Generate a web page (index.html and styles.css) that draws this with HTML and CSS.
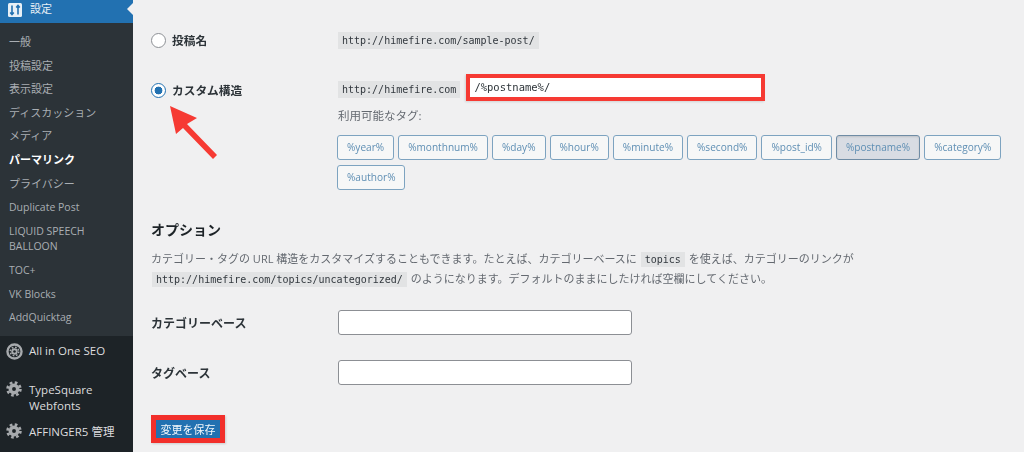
FILE: index.html
```html
<!DOCTYPE html>
<html lang="ja">
<head>
<meta charset="utf-8">
<title>パーマリンク設定</title>
<link rel="stylesheet" href="styles.css">
</head>
<body>
<div class="app">
  <nav class="side">
    <div class="current">
      <svg class="ic-settings" viewBox="0 0 14 14" width="14" height="14"><rect width="14" height="14" rx="1.5" fill="#e8f0f6"/><path d="M4 2.500v9M2.200 9.500 4 11.500l1.800-2M10 11.500v-9M8.200 4.500 10 2.500l1.800 2" fill="none" stroke="#2271b1" stroke-width="1.600"/></svg>
      <span>設定</span>
    </div>
    <ul class="sub">
      <li>一般</li>
      <li>投稿設定</li>
      <li>表示設定</li>
      <li>ディスカッション</li>
      <li>メディア</li>
      <li class="on">パーマリンク</li>
      <li>プライバシー</li>
      <li class="lat">Duplicate Post</li>
      <li class="lat two">LIQUID SPEECH BALLOON</li>
      <li class="lat">TOC+</li>
      <li class="lat">VK Blocks</li>
      <li class="lat">AddQuicktag</li>
    </ul>
    <ul class="top">
      <li class="seo">
        <svg class="ic" viewBox="0 0 20 20" width="17" height="17"><circle cx="10" cy="10" r="8.300" fill="none" stroke="#a7aaad" stroke-width="2.800"/><circle cx="10" cy="10" r="3.800" fill="#a7aaad"/><circle cx="10" cy="10" r="5" fill="none" stroke="#a7aaad" stroke-width="1.800" stroke-dasharray="2 1.930"/><circle cx="10" cy="10" r="1.500" fill="#1d2327"/></svg>
        <span>All in One SEO</span>
      </li>
      <li class="ts">
        <svg class="ic" viewBox="0 0 20 20" width="16" height="16"><circle class="gear-body" cx="10" cy="10" r="6.800"/><circle class="gear-teeth" cx="10" cy="10" r="8" stroke-dasharray="3.280 3" /><circle class="gear-hole" cx="10" cy="10" r="2.400"/></svg>
        <span>TypeSquare Webfonts</span>
      </li>
      <li class="af">
        <svg class="ic" viewBox="0 0 20 20" width="16" height="16"><circle class="gear-body" cx="10" cy="10" r="6.800"/><circle class="gear-teeth" cx="10" cy="10" r="8" stroke-dasharray="3.280 3" /><circle class="gear-hole" cx="10" cy="10" r="2.400"/></svg>
        <span>AFFINGER5 管理</span>
      </li>
    </ul>
  </nav>

  <main class="main">
    <div class="row row-sample">
      <label class="opt"><span class="radio"></span>投稿名</label>
      <div><code>http://himefire.com/sample-post/</code></div>
    </div>

    <div class="row row-custom">
      <label class="opt"><span class="radio checked"></span>カスタム構造</label>
      <div class="cell">
        <div class="struct">
          <code>http://himefire.com</code>
          <div class="mark-input"><span class="field">/%postname%/</span></div>
        </div>
        <p class="avail">利用可能なタグ:</p>
        <div class="tags">
          <button class="tag">%year%</button>
          <button class="tag">%monthnum%</button>
          <button class="tag">%day%</button>
          <button class="tag">%hour%</button>
          <button class="tag">%minute%</button>
          <button class="tag">%second%</button>
          <button class="tag">%post_id%</button>
          <button class="tag active">%postname%</button>
          <button class="tag">%category%</button>
          <button class="tag">%author%</button>
        </div>
      </div>
    </div>

    <h2 class="heading">オプション</h2>
    <p class="desc">カテゴリー・タグの URL 構造をカスタマイズすることもできます。たとえば、カテゴリーベースに <code>topics</code> を使えば、カテゴリーのリンクが<br><code>http://himefire.com/topics/uncategorized/</code> のようになります。デフォルトのままにしたければ空欄にしてください。</p>

    <div class="row row-field first">
      <span class="flabel">カテゴリーベース</span>
      <span class="textbox"></span>
    </div>
    <div class="row row-field">
      <span class="flabel">タグベース</span>
      <span class="textbox"></span>
    </div>

    <div class="mark-btn"><button class="save">変更を保存</button></div>

    <svg class="arrow" viewBox="0 0 60 60" width="60" height="60"><path d="M2 2 29 14 19 20 49 51 45 55 15 24 8 30z" fill="#f63a33"/></svg>
  </main>
</div>
</body>
</html>
```

FILE: styles.css
```css
* { box-sizing: border-box; }
html, body { margin: 0; padding: 0; height: 452px; overflow: hidden; }
body {
  background: #f0f0f1;
  color: #3c434a;
  font-family: "Open Sans", "Noto Sans CJK JP", sans-serif;
  font-size: 12px;
}
ul { list-style: none; margin: 0; padding: 0; }
p { margin: 0; }

.app { display: flex; height: 452px; filter: blur(.35px); }

/* Sidebar */
.side {
  width: 133px;
  flex: none;
  background: #1d2327;
  color: #f0f0f1;
  display: flex;
  flex-direction: column;
}
.current {
  position: relative;
  height: 23px;
  background: #2271b1;
  color: #e8f0f6;
  display: flex;
  align-items: flex-start;
  gap: 8px;
  padding: 2px 0 0 8px;
  font-size: 11px;
  line-height: 14px;
}
.current::after {
  content: "";
  position: absolute;
  right: 0;
  top: 3px;
  border: 6px solid transparent;
  border-right-color: #f0f0f1;
  border-left-width: 0;
}
.ic-settings { margin-top: 1px; flex: none; }
.sub {
  background: #2c3338;
  height: 313px;
  padding-top: 7px;
  color: #a9aeb3;
  font-size: 11px;
}
.sub li {
  min-height: 23.600px;
  padding: 4px 6px 4px 9px;
  line-height: 15.600px;
}
.sub .lat { font-size: 10.500px; padding-top: 5px; padding-bottom: 3px; }
.sub .on { color: #fff; font-weight: 700; }
.sub .two { padding-right: 30px; }
.top { color: #dcdcde; font-size: 11.500px; line-height: 15.500px; }
.top li { display: flex; gap: 6px; padding-left: 6px; }
.top li span { flex: 1; padding-right: 20px; }
.seo { height: 38px; padding-top: 7px; align-items: flex-start; }
.ts { height: 43px; padding-top: 7px; }
.af { padding-top: 6px; }
.ts .ic, .af .ic { margin-right: 1px; }
.ts span, .af span { padding-top: 1px; }
.ic { flex: none; }
.gear-body { fill: #a7aaad; }
.gear-teeth { fill: none; stroke: #a7aaad; stroke-width: 3.400; }
.gear-hole { fill: #1d2327; }
.af span { padding-right: 0 !important; white-space: nowrap; }

/* Main */
.main {
  position: relative;
  flex: 1;
  padding: 31px 0 0 18px;
}
.row { display: grid; grid-template-columns: 187px 1fr; }
.row-sample { height: 43px; }
.opt {
  display: flex;
  align-items: center;
  gap: 6px;
  height: 17px;
  font-weight: 700;
  font-size: 11.700px;
  color: #2c3338;
}
.radio {
  width: 15px;
  height: 15px;
  border-radius: 50%;
  border: 1px solid #8c8f94;
  background: #fff;
  flex: none;
  margin-top: 1px;
}
.radio.checked {
  border: 1.500px solid #2271b1;
  background: radial-gradient(circle, #2271b1 0 3.600px, #fff 4.200px);
}
.row-custom .opt { margin-top: 7px; }

code {
  background: #e2e3e4;
  font-family: "DejaVu Sans Mono", monospace;
  font-size: 10px;
  color: #32383e;
  padding: 2px 4px;
  margin: 0 1px;
}
.row-sample code, .struct code { display: inline-block; line-height: 17px; padding: 0 4px; margin: 0; }
.struct { display: flex; align-items: flex-start; gap: 6px; }
.struct code { margin-top: 7px; }
.mark-input {
  width: 299px;
  height: 27px;
  border: 4px solid #f63a33;
  background: #fff;
  padding: 0 0 0 4px;
  box-shadow: -1px 1px 2px rgba(0,0,0,.12);
}
.field {
  font-family: "DejaVu Sans Mono", monospace;
  font-size: 10.500px;
  line-height: 17px;
  display: block;
  padding-top: 1px;
  color: #2c3338;
}
.avail { margin-top: 6px; line-height: 18px; font-size: 11.500px; color: #646970; }
.tags {
  display: flex;
  flex-wrap: wrap;
  gap: 5px 4px;
  margin: 10px 0 0 -1px;
  width: 680px;
}
.tag {
  height: 25px;
  padding: 0 9px;
  border: 1px solid #7da3c0;
  border-radius: 3px;
  background: #f6f7f7;
  color: #5f8fb4;
  font: 10.100px/23px "Open Sans", sans-serif;
}
.tag.active {
  background: #d8dce3;
  border-color: #6f8ca5;
  box-shadow: inset 0 1px 2px rgba(0,0,0,.12);
}

.heading {
  margin: 30px 0 0;
  font-size: 14px;
  line-height: 20px;
  font-weight: 700;
  color: #1d2327;
}
.desc {
  margin-top: 9px;
  width: 850px;
  font-size: 11px;
  line-height: 19px;
  color: #646970;
  white-space: nowrap;
}
.row-field { height: 50px; align-items: start; }
.row-field.first { margin-top: 21px; }
.flabel { font-weight: 700; font-size: 12px; line-height: 27px; color: #2c3338; }
.textbox {
  display: block;
  width: 294px;
  height: 25px;
  background: #fff;
  border: 1px solid #8c8f94;
  border-radius: 3px;
}
.mark-btn {
  margin-top: 5px;
  width: 74px;
  height: 28px;
  padding: 5px;
  background: #f22f2b;
  box-shadow: 1px 1px 2px rgba(0,0,0,.15);
}
.save {
  display: block;
  width: 64px;
  height: 18px;
  padding: 0;
  border: 0;
  background: #2271b1;
  color: #f4f8fb;
  font: 11px/18px "Noto Sans CJK JP", sans-serif;
}
.arrow { position: absolute; left: 35px; top: 104px; }
```
